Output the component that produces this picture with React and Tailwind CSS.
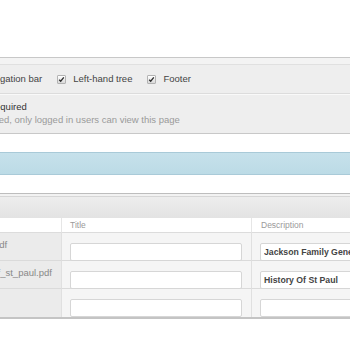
function Check() {
  return (
    <span className="w-[9px] h-[9px] shrink-0 border border-[#b3b3b3] rounded-[1px] bg-linear-to-b from-white to-[#d9d9d9] flex items-center justify-center">
      <svg viewBox="0 0 8 8" className="w-[7px] h-[7px]">
        <path d="M1.4 4.2 L3.1 6 L6.6 1.6" stroke="#2b2b2b" strokeWidth="1.5" fill="none" />
      </svg>
    </span>
  )
}

function Option({ label, first }) {
  return (
    <label className={`flex items-center gap-[7px] ${first ? '' : 'ml-[15px]'}`}>
      <Check />
      <span>{label}</span>
    </label>
  )
}

const rows = [
  { file: 'jackson.pdf', title: '', desc: 'Jackson Family Genealogy' },
  { file: 'history_of_st_paul.pdf', title: '', desc: 'History Of St Paul' },
  { file: '', title: '', desc: '' },
]

export default function App() {
  return (
    <div className="w-[350px] h-[350px] overflow-hidden bg-white font-['Liberation_Sans',Arial,sans-serif]">
      <div className="ml-[-60px] w-[480px] pt-[57px]">
        {/* page options panel */}
        <div className="border-t border-b border-[#c8c8c8] bg-[#eeeeee]">
          <div className="h-[7px] bg-[#f3f3f3] border-b border-[#e0e0e0]" />
          <div className="h-[29px] flex items-center pl-[25px] text-[9.5px] text-[#444] border-b border-[#dcdcdc] whitespace-nowrap">
            <Option label="Navigation bar" first />
            <Option label="Left-hand tree" />
            <Option label="Footer" />
          </div>
          <div className="h-[39px] border-t border-[#f9f9f9] pl-[26px] pt-[5px] text-[9.5px] leading-[13px] whitespace-nowrap">
            <p className="text-[#333]">Login required</p>
            <p className="text-[#9a9a9a]">If checked, only logged in users can view this page</p>
          </div>
        </div>

        <div className="h-[18px]" />
        <div className="h-[23px] border-t border-b border-[#a9cad8] bg-linear-to-b from-[#c6e1eb] to-[#bcdbe6]" />
        <div className="h-[18px]" />

        {/* attachments table */}
        <div className="border-t border-[#bdbdbd]">
          <div className="h-[2px] bg-[#f2f2f2] border-b border-[#d6d6d6] box-content" />
          <div className="h-[21px] bg-linear-to-b from-[#ededed] to-[#e3e3e3]" />
          <div className="grid grid-cols-[122px_190px_168px] border-b-2 border-b-[#c4c4c4]">
            <div className="h-[15px] bg-white border-r border-[#e6e6e6] border-b border-b-[#dcdcdc]" />
            <div className="h-[15px] bg-white border-r border-[#e6e6e6] border-b border-b-[#dcdcdc] pl-[8px] text-[8.5px] leading-[15px] text-[#9a9a9a]">Title</div>
            <div className="h-[15px] bg-white border-b border-[#dcdcdc] pl-[9px] text-[8.5px] leading-[15px] text-[#9a9a9a]">Description</div>
            {rows.map((r, i) => (
              <div key={i} className="contents">
                <div className={`h-[28px] bg-[#ebebeb] border-r border-[#e0e0e0] pl-[19px] pt-[6px] text-[9.5px] leading-[12px] text-[#888] whitespace-nowrap ${i < 2 ? 'border-b border-b-[#dadada]' : ''}`}>
                  {r.file}
                </div>
                <div className={`h-[28px] bg-[#f5f5f5] border-r border-[#e0e0e0] pl-[8px] pt-[5px] ${i < 2 ? 'border-b border-b-[#dadada]' : ''}`}>
                  <input
                    readOnly
                    value={r.title}
                    className="w-[172px] h-[18px] bg-white border border-[#d6d6d6] rounded-[2px] px-[3px] text-[8.7px] font-bold text-[#444] outline-none"
                  />
                </div>
                <div className={`h-[28px] bg-[#f5f5f5] pl-[8px] pt-[5px] ${i < 2 ? 'border-b border-b-[#dadada]' : ''}`}>
                  <input
                    readOnly
                    value={r.desc}
                    className="w-[172px] h-[18px] bg-white border border-[#d6d6d6] rounded-[2px] px-[3px] text-[8.7px] font-bold text-[#444] outline-none"
                  />
                </div>
              </div>
            ))}
          </div>
        </div>
      </div>
    </div>
  )
}
